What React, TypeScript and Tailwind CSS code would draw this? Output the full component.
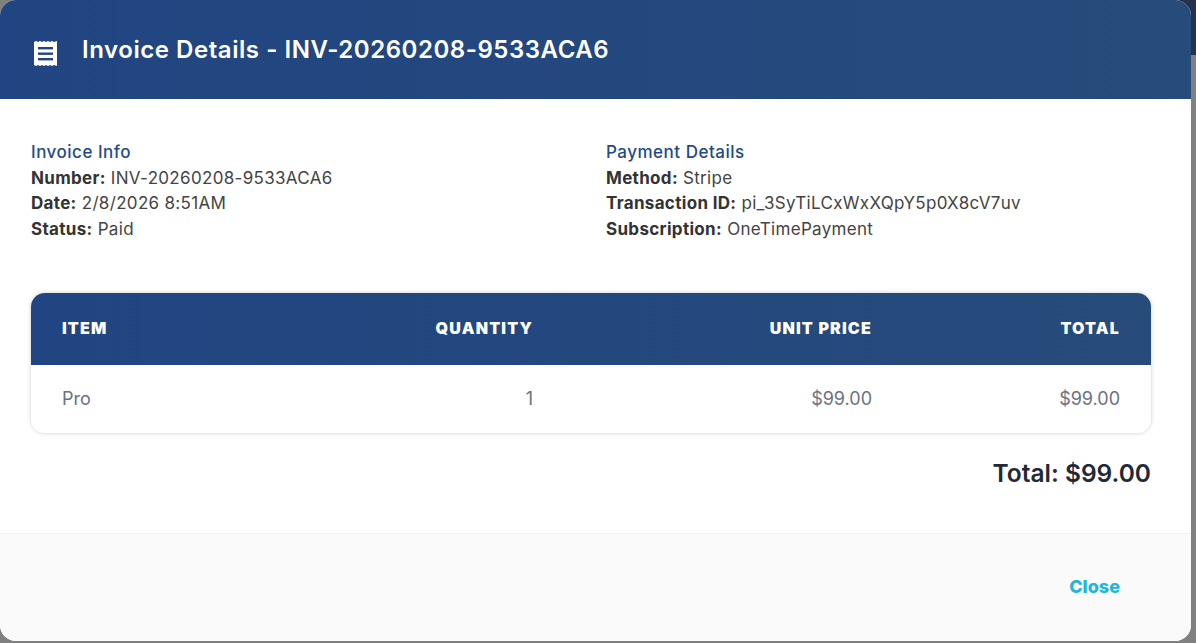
const ROWS = [
  ['Number:', 'INV-20260208-9533ACA6'],
  ['Date:', '2/8/2026 8:51AM'],
  ['Status:', 'Paid'],
]

const PAYMENT_ROWS = [
  ['Method:', 'Stripe'],
  ['Transaction ID:', 'pi_3SyTiLCxWxXQpY5p0X8cV7uv'],
  ['Subscription:', 'OneTimePayment'],
]

function ReceiptIcon() {
  return (
    <svg width="23" height="25" viewBox="0 0 23 25" fill="white" className="mt-[8px] shrink-0">
      <path d="M0 1 L2 0 L4 1 L6 0 L8 1 L10 0 L12 1 L14 0 L16 1 L18 0 L20 1 L23 0 V25 L20 24 L18 25 L16 24 L14 25 L12 24 L10 25 L8 24 L6 25 L4 24 L2 25 L0 24 Z" />
      <rect x="4" y="6" width="15" height="2.4" fill="#234680" />
      <rect x="4" y="11.5" width="15" height="2.4" fill="#234680" />
      <rect x="4" y="17" width="15" height="2.4" fill="#234680" />
    </svg>
  )
}

function InfoBlock({ title, rows }: { title: string; rows: string[][] }) {
  return (
    <div className="w-[575px] shrink-0 text-[17px] leading-[25.5px] tracking-[0.32px] text-[#333]">
      <h4 className="font-medium tracking-[0.5px] text-[#234a87]">{title}</h4>
      {rows.map(([label, value]) => (
        <p key={label}>
          <strong className="font-bold">{label}</strong> <span className="text-[#444]">{value}</span>
        </p>
      ))}
    </div>
  )
}

export default function App() {
  return (
    <div className="relative flex h-[643px] w-[1196px] flex-col items-end overflow-hidden bg-[#808080] font-['Inter',sans-serif]">
      {/* page behind the backdrop */}
      <div className="h-[55px] w-[40px] bg-[#22324f]" />

      <div className="absolute left-0 top-0 flex h-[641px] w-[1191px] flex-col overflow-hidden rounded-[16px] bg-white">
        <div className="flex h-[99px] shrink-0 items-center gap-[25px] bg-gradient-to-r from-[#204582] to-[#274b7a] pl-[34px]">
          <ReceiptIcon />
          <h2 className="text-[24px] font-semibold leading-none tracking-[0.55px] text-white">Invoice Details - INV-20260208-9533ACA6</h2>
        </div>

        <div className="flex-1 pl-[31px] pr-[40px] pt-[41px]">
          <div className="flex">
            <InfoBlock title="Invoice Info" rows={ROWS} />
            <InfoBlock title="Payment Details" rows={PAYMENT_ROWS} />
          </div>

          <div className="mt-[51px] overflow-hidden rounded-[14px] shadow-[0_0_4px_rgba(0,0,0,0.2)]">
            <div className="grid h-[72px] grid-cols-[1fr_186px_339px_248px] items-center bg-gradient-to-r from-[#204582] to-[#274b7a] px-[31px] pb-[2px] text-[16px] font-black tracking-[1.2px] text-white">
              <span>ITEM</span>
              <span className="text-right">QUANTITY</span>
              <span className="text-right">UNIT PRICE</span>
              <span className="text-right">TOTAL</span>
            </div>
            <div className="grid h-[68px] grid-cols-[1fr_186px_339px_248px] items-center bg-white px-[31px] pb-[2px] text-[18px] text-[#6b7280]">
              <span>Pro</span>
              <span className="text-right">1</span>
              <span className="text-right">$99.00</span>
              <span className="text-right">$99.00</span>
            </div>
          </div>

          <div className="mt-[28px] text-right text-[24.5px] font-semibold leading-none text-[#1f2937]">Total: $99.00</div>
        </div>

        <div className="flex h-[108px] shrink-0 items-center justify-end border-t border-[#f0f0f0] bg-[#fafafa] pb-[2px] pr-[71px]">
          <button className="text-[18px] font-extrabold text-[#1fb6d9]">Close</button>
        </div>
      </div>
    </div>
  )
}
